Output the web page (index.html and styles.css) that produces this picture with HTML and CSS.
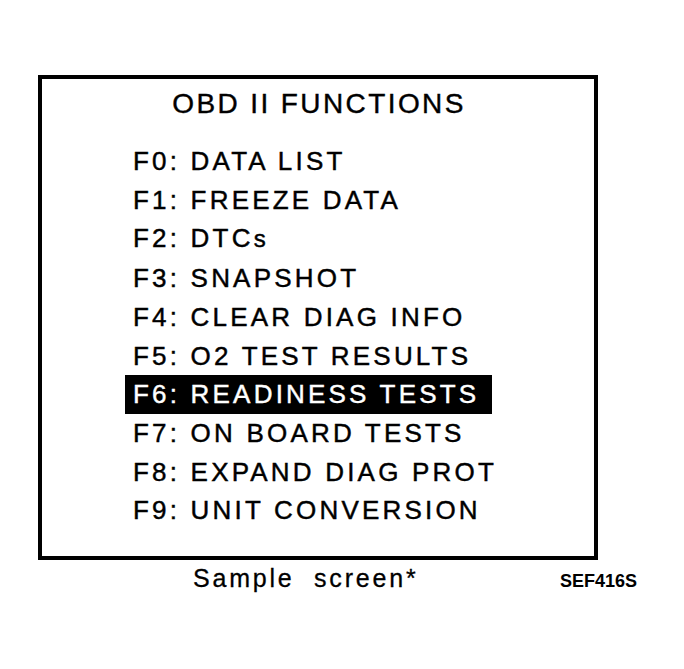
FILE: index.html
```html
<!DOCTYPE html>
<html>
<head>
<meta charset="utf-8">
<link rel="stylesheet" href="styles.css">
</head>
<body>
<div class="page">
  <div class="screen">
    <div class="title">OBD II FUNCTIONS</div>
    <ul class="menu">
      <li class="item">F0: DATA LIST</li>
      <li class="item">F1: FREEZE DATA</li>
      <li class="item">F2: DTC<span class="lower">s</span></li>
      <li class="item">F3: SNAPSHOT</li>
      <li class="item">F4: CLEAR DIAG INFO</li>
      <li class="item">F5: O2 TEST RESULTS</li>
      <li class="item selected">F6: READINESS TESTS</li>
      <li class="item">F7: ON BOARD TESTS</li>
      <li class="item">F8: EXPAND DIAG PROT</li>
      <li class="item">F9: UNIT CONVERSION</li>
    </ul>
  </div>
  <div class="footer">
    <span class="caption">Sample&nbsp; screen*</span>
    <span class="code">SEF416S</span>
  </div>
</div>
</body>
</html>
```
FILE: styles.css
```css
html, body {
  margin: 0;
  padding: 0;
  background: #ffffff;
}
body {
  width: 684px;
  height: 669px;
  overflow: hidden;
  font-family: "Liberation Sans", Arial, sans-serif;
  color: #000000;
}
.page {
  padding-top: 75px;
}
.screen {
  margin-left: 38px;
  width: 560px;
  height: 485px;
  box-sizing: border-box;
  border: 4px solid #000000;
  padding-top: 6px;
}
.title {
  text-align: center;
  font-size: 28px;
  line-height: 38px;
  letter-spacing: 2.4px;
  padding-left: 2px;
  -webkit-text-stroke: 0.4px #000000;
}
.menu {
  list-style: none;
  margin: 19px 0 0 83px;
  padding: 0;
}
.item {
  width: fit-content;
  padding: 0 8px 0 8px;
  font-size: 26px;
  line-height: 38.7px;
  letter-spacing: 3.2px;
  white-space: nowrap;
  -webkit-text-stroke: 0.45px #000000;
}
.lower {
  font-size: 24px;
}
.selected {
  background: #000000;
  color: #ffffff;
  padding-right: 13px;
  -webkit-text-stroke: 0.45px #ffffff;
}
.footer {
  display: flex;
  align-items: baseline;
  justify-content: space-between;
  padding: 3px 47px 0 193px;
}
.caption {
  font-size: 25px;
  line-height: 30px;
  letter-spacing: 2.8px;
  -webkit-text-stroke: 0.3px #000000;
}
.code {
  font-size: 18px;
  font-weight: bold;
  letter-spacing: 0;
}
```
